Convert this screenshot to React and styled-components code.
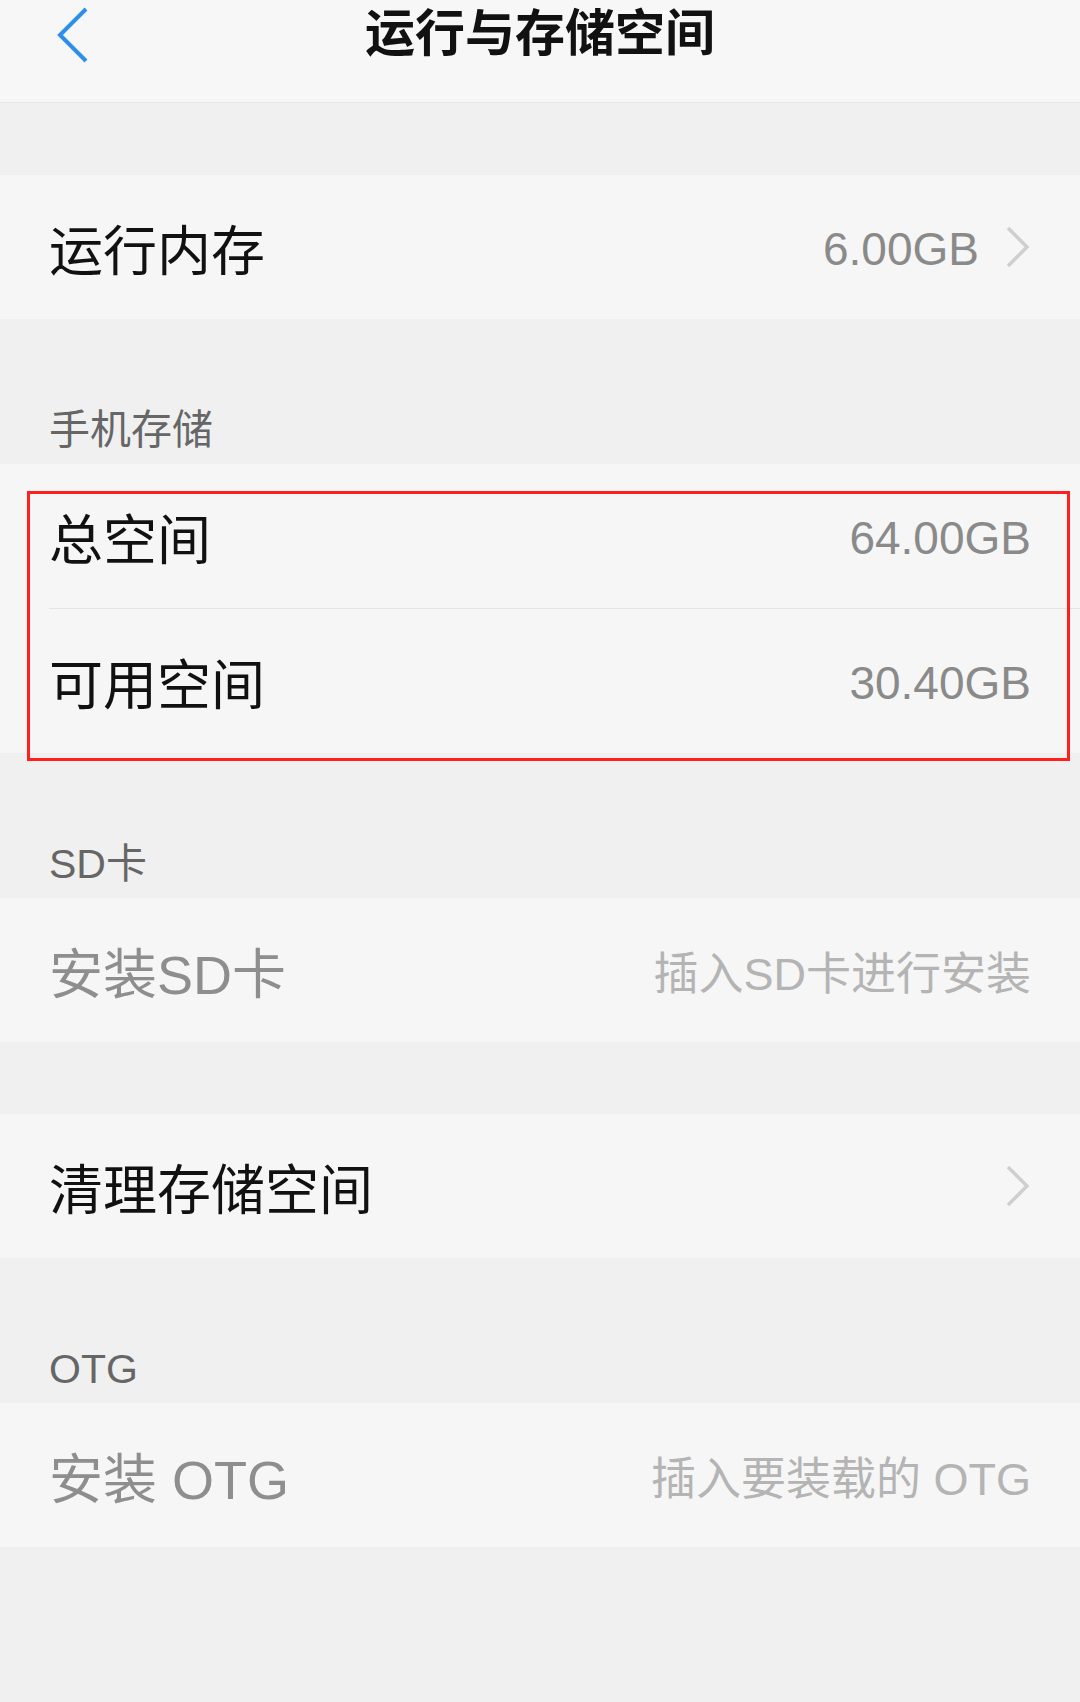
import React from "react"
import styled, { createGlobalStyle } from "styled-components"

const GlobalStyle = createGlobalStyle`
  body {
    margin: 0;
    background: #f0f0f0;
    font-family: "Liberation Sans", "Noto Sans CJK SC", sans-serif;
  }
`

const Page = styled.div`
  min-height: 1702px;
  background: #f0f0f0;
`

const Header = styled.div`
  height: 102px;
  background: #f7f7f7;
  border-bottom: 1px solid #e8e8e8;
  display: grid;
  grid-template-columns: 1fr auto 1fr;
  align-items: start;
`

const Back = styled.div`
  padding: 7px 0 0 56px;
  height: 56px;
  svg {
    display: block;
  }
`

const Title = styled.div`
  font-size: 50px;
  line-height: 60px;
  padding-top: 4px;
  font-weight: 700;
  color: #111;
`

const Spacer = styled.div`
  height: ${({ size }) => size}px;
`

const Group = styled.div`
  position: relative;
  background: #f6f6f6;
`

const Row = styled.div`
  height: 144px;
  display: flex;
  align-items: center;
  justify-content: space-between;
  padding: 0 49px;
`

const Label = styled.div`
  font-size: 54px;
  color: ${({ muted }) => (muted ? "#8e8e8e" : "#111")};
`

const Side = styled.div`
  display: flex;
  align-items: center;
  gap: 26px;
`

const Value = styled.div`
  font-size: ${({ hint }) => (hint ? 45 : 46)}px;
  padding-top: ${({ hint }) => (hint ? 0 : 4)}px;
  color: ${({ hint }) => (hint ? "#b4b4b4" : "#8a8a8a")};
`

const Divider = styled.div`
  height: 1px;
  margin-left: 49px;
  background: #e4e4e4;
`

const SectionTitle = styled.div`
  height: 145px;
  box-sizing: border-box;
  display: flex;
  align-items: flex-end;
  padding: 0 49px 12px;
  font-size: 41px;
  line-height: 44px;
  color: #666;
`

const Highlight = styled.div`
  position: absolute;
  top: 27px;
  left: 27px;
  right: 10px;
  bottom: -8px;
  border: 3px solid #ff1f1f;
  pointer-events: none;
`

const Chevron = () => (
  <svg width="26" height="42" viewBox="0 0 26 42">
    <path d="M3 2 L22 21 L3 40" fill="none" stroke="#cfcfcf" strokeWidth="3.5" />
  </svg>
)

const BackIcon = () => (
  <svg width="32" height="56" viewBox="0 0 32 56">
    <path d="M30 2 L4 28 L30 54" fill="none" stroke="#2d8fe9" strokeWidth="4" />
  </svg>
)

const App = () => {
  return (
    <Page>
      <GlobalStyle />
      <Header>
        <Back>
          <BackIcon />
        </Back>
        <Title>运行与存储空间</Title>
        <div />
      </Header>

      <Spacer size={72} />
      <Group>
        <Row>
          <Label>运行内存</Label>
          <Side>
            <Value>6.00GB</Value>
            <Chevron />
          </Side>
        </Row>
      </Group>

      <SectionTitle>手机存储</SectionTitle>
      <Group>
        <Row>
          <Label>总空间</Label>
          <Value>64.00GB</Value>
        </Row>
        <Divider />
        <Row>
          <Label>可用空间</Label>
          <Value>30.40GB</Value>
        </Row>
        <Highlight />
      </Group>

      <SectionTitle>SD卡</SectionTitle>
      <Group>
        <Row>
          <Label muted>安装SD卡</Label>
          <Value hint>插入SD卡进行安装</Value>
        </Row>
      </Group>

      <Spacer size={72} />
      <Group>
        <Row>
          <Label>清理存储空间</Label>
          <Chevron />
        </Row>
      </Group>

      <SectionTitle>OTG</SectionTitle>
      <Group>
        <Row>
          <Label muted>安装 OTG</Label>
          <Value hint>插入要装载的 OTG</Value>
        </Row>
      </Group>
    </Page>
  )
}

export default App
